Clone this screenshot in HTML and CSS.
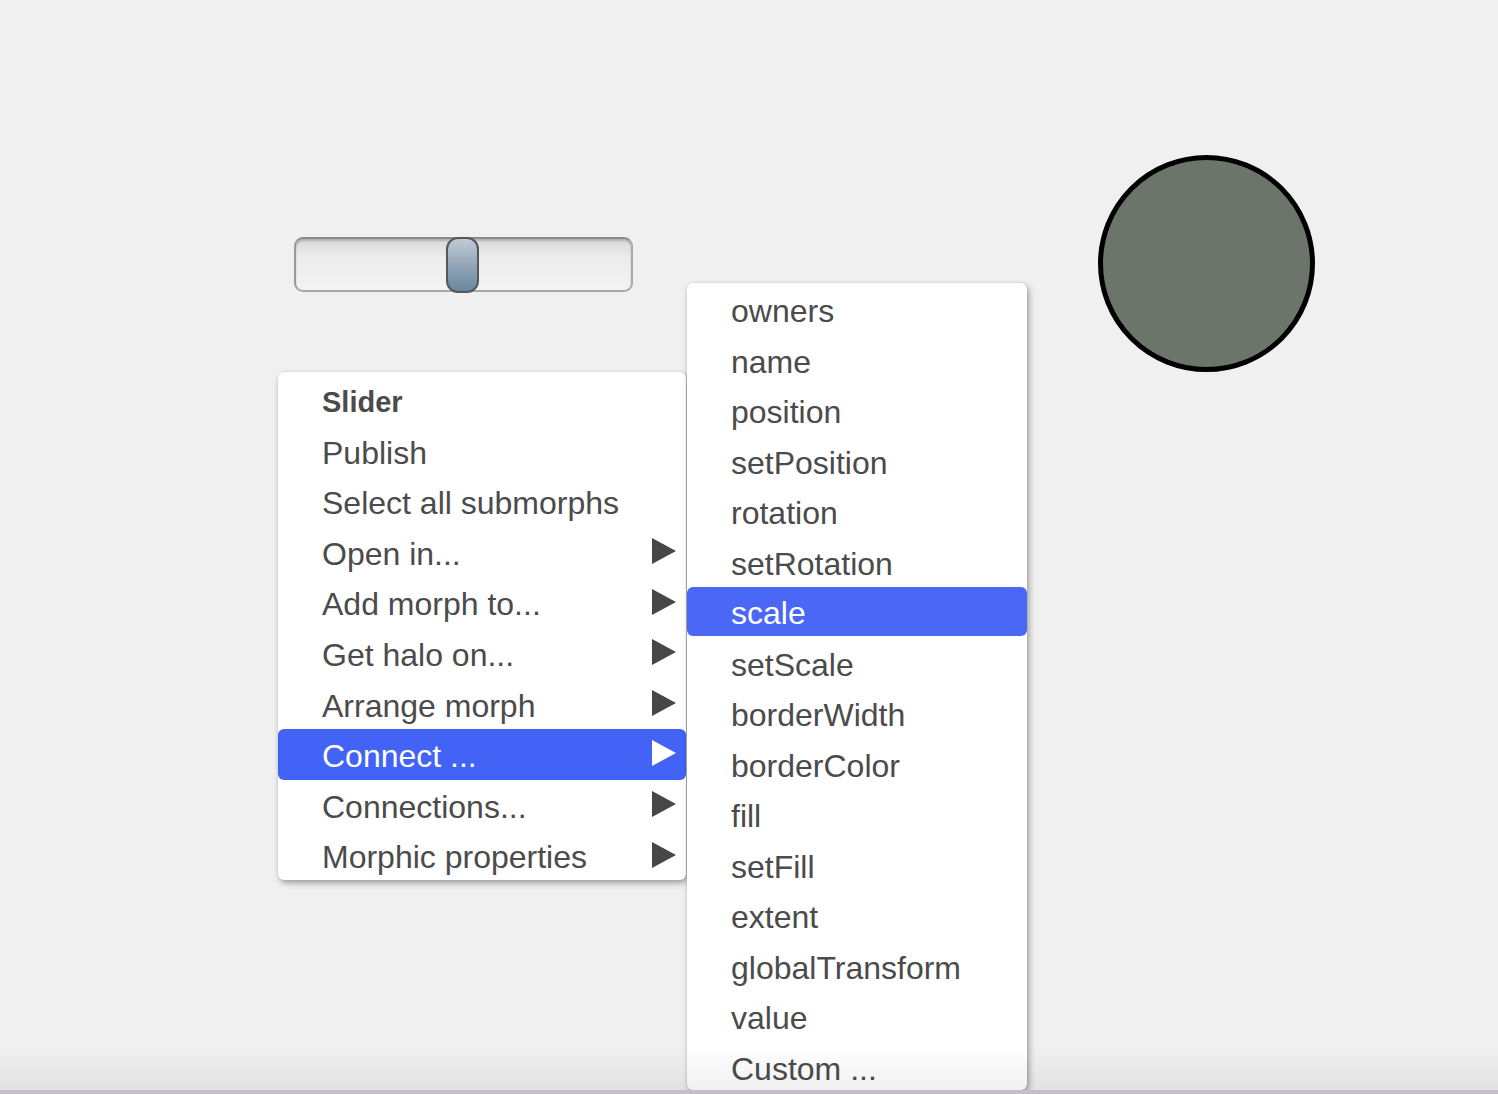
FILE: index.html
```html
<!DOCTYPE html>
<html>
<head>
<meta charset="utf-8">
<link rel="stylesheet" href="styles.css">
</head>
<body>
<div class="world">
  <div class="slider"><div class="knob"></div></div>
  <div class="ellipse"></div>

  <div class="menu menu-main">
    <div class="item title">Slider</div>
    <div class="item">Publish</div>
    <div class="item">Select all submorphs</div>
    <div class="item sub">Open in...</div>
    <div class="item sub">Add morph to...</div>
    <div class="item sub">Get halo on...</div>
    <div class="item sub">Arrange morph</div>
    <div class="item sub active">Connect ...</div>
    <div class="item sub">Connections...</div>
    <div class="item sub">Morphic properties</div>
  </div>

  <div class="menu menu-props">
    <div class="item">owners</div>
    <div class="item">name</div>
    <div class="item">position</div>
    <div class="item">setPosition</div>
    <div class="item">rotation</div>
    <div class="item">setRotation</div>
    <div class="item active">scale</div>
    <div class="item">setScale</div>
    <div class="item">borderWidth</div>
    <div class="item">borderColor</div>
    <div class="item">fill</div>
    <div class="item">setFill</div>
    <div class="item">extent</div>
    <div class="item">globalTransform</div>
    <div class="item">value</div>
    <div class="item">Custom ...</div>
  </div>

  <div class="bottom-fade"></div>
</div>
</body>
</html>
```

FILE: styles.css
```css
html, body {
  margin: 0;
  padding: 0;
  background: #f0f0f0;
}

.world {
  position: relative;
  width: 1498px;
  height: 1094px;
  overflow: hidden;
  background: #f0f0f0;
  font-family: "Liberation Sans", Arial, sans-serif;
}

.slider {
  position: absolute;
  left: 294px;
  top: 237px;
  width: 335px;
  height: 51px;
  border: 2px solid #a9a9a9;
  border-top-color: #8a8a8a;
  border-left-color: #999;
  border-radius: 9px;
  background: linear-gradient(to bottom, #d8d8d8 0%, #ececec 35%, #f3f3f3 100%);
  box-shadow: inset 0 2px 2px rgba(0,0,0,0.18);
}

.knob {
  position: absolute;
  left: 150px;
  top: -2px;
  width: 29px;
  height: 52px;
  border: 2px solid #575757;
  border-radius: 12px;
  background: linear-gradient(to bottom, #bfcbd6 0%, #97aabb 45%, #6a86a0 100%);
}

.ellipse {
  position: absolute;
  left: 1098px;
  top: 155px;
  width: 207px;
  height: 207px;
  border: 5px solid #000;
  border-radius: 50%;
  background: #6b756a;
}

.menu {
  position: absolute;
  box-sizing: border-box;
  background: #fff;
  border-radius: 6px;
  padding-top: 3px;
  box-shadow: 2px 3px 6px rgba(0,0,0,0.35), 0 0 2px rgba(0,0,0,0.12);
}

.menu-main {
  left: 278px;
  top: 372px;
  width: 408px;
  height: 508px;
}

.menu-props {
  left: 687px;
  top: 283px;
  width: 340px;
  height: 807px;
}

.item {
  position: relative;
  height: 50.6px;
  line-height: 55px;
  padding-left: 44px;
  font-size: 32px;
  color: #4b4b4b;
  white-space: nowrap;
  border-radius: 6px;
}

.menu-props .item {
  height: 50.5px;
  line-height: 50px;
}

.item.title {
  font-weight: bold;
  font-size: 29px;
}

.item.sub::after {
  content: "";
  position: absolute;
  right: 10px;
  top: 50%;
  margin-top: -14px;
  width: 0;
  height: 0;
  border-top: 13.5px solid transparent;
  border-bottom: 13.5px solid transparent;
  border-left: 24px solid #474747;
}

.item.active {
  background: #4263f5;
  color: #fff;
}

.menu-props .item.active {
  background: #4a68f5;
  height: 48.5px;
  margin-top: -2px;
  margin-bottom: 4px;
  line-height: 52px;
}

.item.active.sub::after {
  border-left-color: #fff;
}

.bottom-fade {
  position: absolute;
  left: 0;
  right: 0;
  bottom: 0;
  height: 48px;
  pointer-events: none;
  background: linear-gradient(to bottom, rgba(0,0,0,0) 0%, rgba(0,0,0,0.06) 92%, #c3bfc7 92%, #c3bfc7 100%);
}
```
